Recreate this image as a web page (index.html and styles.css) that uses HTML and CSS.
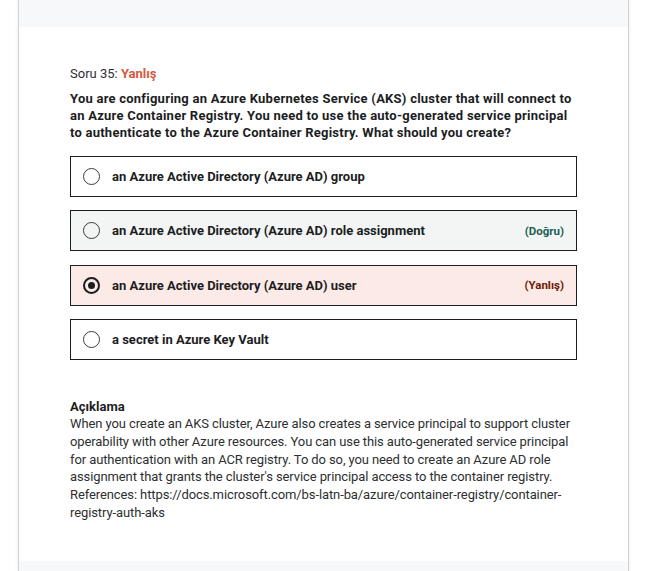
FILE: index.html
```html
<!DOCTYPE html>
<html lang="tr">
<head>
<meta charset="utf-8">
<link rel="stylesheet" href="styles.css">
</head>
<body>
<div class="card">
  <div class="band band-top"></div>
  <div class="content">
    <div class="qhead">Soru 35: <span class="wrong">Yanlış</span></div>
    <div class="question">You are configuring an Azure Kubernetes Service (AKS) cluster that will connect to an Azure Container Registry. You need to use the auto-generated service principal to authenticate to the Azure Container Registry. What should you create?</div>
    <ul class="options">
      <li class="option">
        <span class="radio"></span>
        <span class="label">an Azure Active Directory (Azure AD) group</span>
      </li>
      <li class="option correct">
        <span class="radio"></span>
        <span class="label">an Azure Active Directory (Azure AD) role assignment</span>
        <span class="tag">(Doğru)</span>
      </li>
      <li class="option incorrect">
        <span class="radio checked"></span>
        <span class="label">an Azure Active Directory (Azure AD) user</span>
        <span class="tag">(Yanlış)</span>
      </li>
      <li class="option">
        <span class="radio"></span>
        <span class="label">a secret in Azure Key Vault</span>
      </li>
    </ul>
    <div class="explain">
      <div class="explain-title">Açıklama</div>
      <div class="explain-body">When you create an AKS cluster, Azure also creates a service principal to support cluster operability with other Azure resources. You can use this auto-generated service principal for authentication with an ACR registry. To do so, you need to create an Azure AD role assignment that grants the cluster's service principal access to the container registry.<br>References: https://docs.microsoft.com/bs-latn-ba/azure/container-registry/container-registry-auth-aks</div>
    </div>
  </div>
  <div class="band band-bottom"></div>
</div>
</body>
</html>
```

FILE: styles.css
```css
* { box-sizing: border-box; }
html, body { margin: 0; padding: 0; background: #ffffff; }
body {
  font-family: Roboto, "Liberation Sans", Arial, sans-serif;
  color: #1c1d1f;
  height: 571px;
  overflow: hidden;
}
.card {
  margin-left: 18px;
  width: 611px;
  border-left: 1px solid #d1d2d6;
  border-right: 1px solid #d1d2d6;
  box-shadow: 0 0 4px rgba(0,0,0,0.08);
  background: #fff;
}
.band { background: #f7f8fa; }
.band-top { height: 27px; }
.band-bottom { height: 20px; }
.content {
  padding: 38px 51px 16px 51px;
  height: 534px;
}
.qhead {
  font-size: 13px;
  line-height: 17px;
  color: #2d2f31;
  margin-bottom: 8px;
}
.wrong { color: #d45a3e; font-weight: 700; }
.question {
  font-size: 13px;
  font-weight: 700;
  line-height: 17px;
  letter-spacing: 0.24px;
  margin-bottom: 15px;
  width: 507px;
}
.options {
  list-style: none;
  margin: 0;
  padding: 0;
  display: flex;
  flex-direction: column;
  gap: 13.4px;
  width: 507px;
}
.option {
  display: flex;
  align-items: center;
  height: 41px;
  border: 1px solid #1c1d1f;
  padding: 0 12px 0 12px;
  font-size: 13px;
  font-weight: 700;
}
.option.correct { background: #f2f5f4; }
.option.incorrect { background: #fceae7; }
.radio {
  width: 17px;
  height: 17px;
  border: 1px solid #3a3b3d;
  border-radius: 50%;
  margin-right: 12px;
  flex: none;
  display: flex;
  align-items: center;
  justify-content: center;
  background: transparent;
}
.radio.checked { border-width: 2px; border-color: #1c1d1f; }
.radio.checked::after {
  content: "";
  width: 7px;
  height: 7px;
  border-radius: 50%;
  background: #1c1d1f;
}
.label { flex: 1; }
.tag {
  font-size: 11.5px;
  font-weight: 700;
}
.correct .tag { color: #1e5e53; }
.incorrect .tag { color: #6e1a06; }
.explain {
  margin-top: 38px;
  font-size: 13px;
  line-height: 17px;
  color: #2d2f31;
}
.explain-title { font-weight: 700; color: #1c1d1f; }
.explain-body { width: 507px; letter-spacing: -0.1px; line-height: 17.7px; }
```
